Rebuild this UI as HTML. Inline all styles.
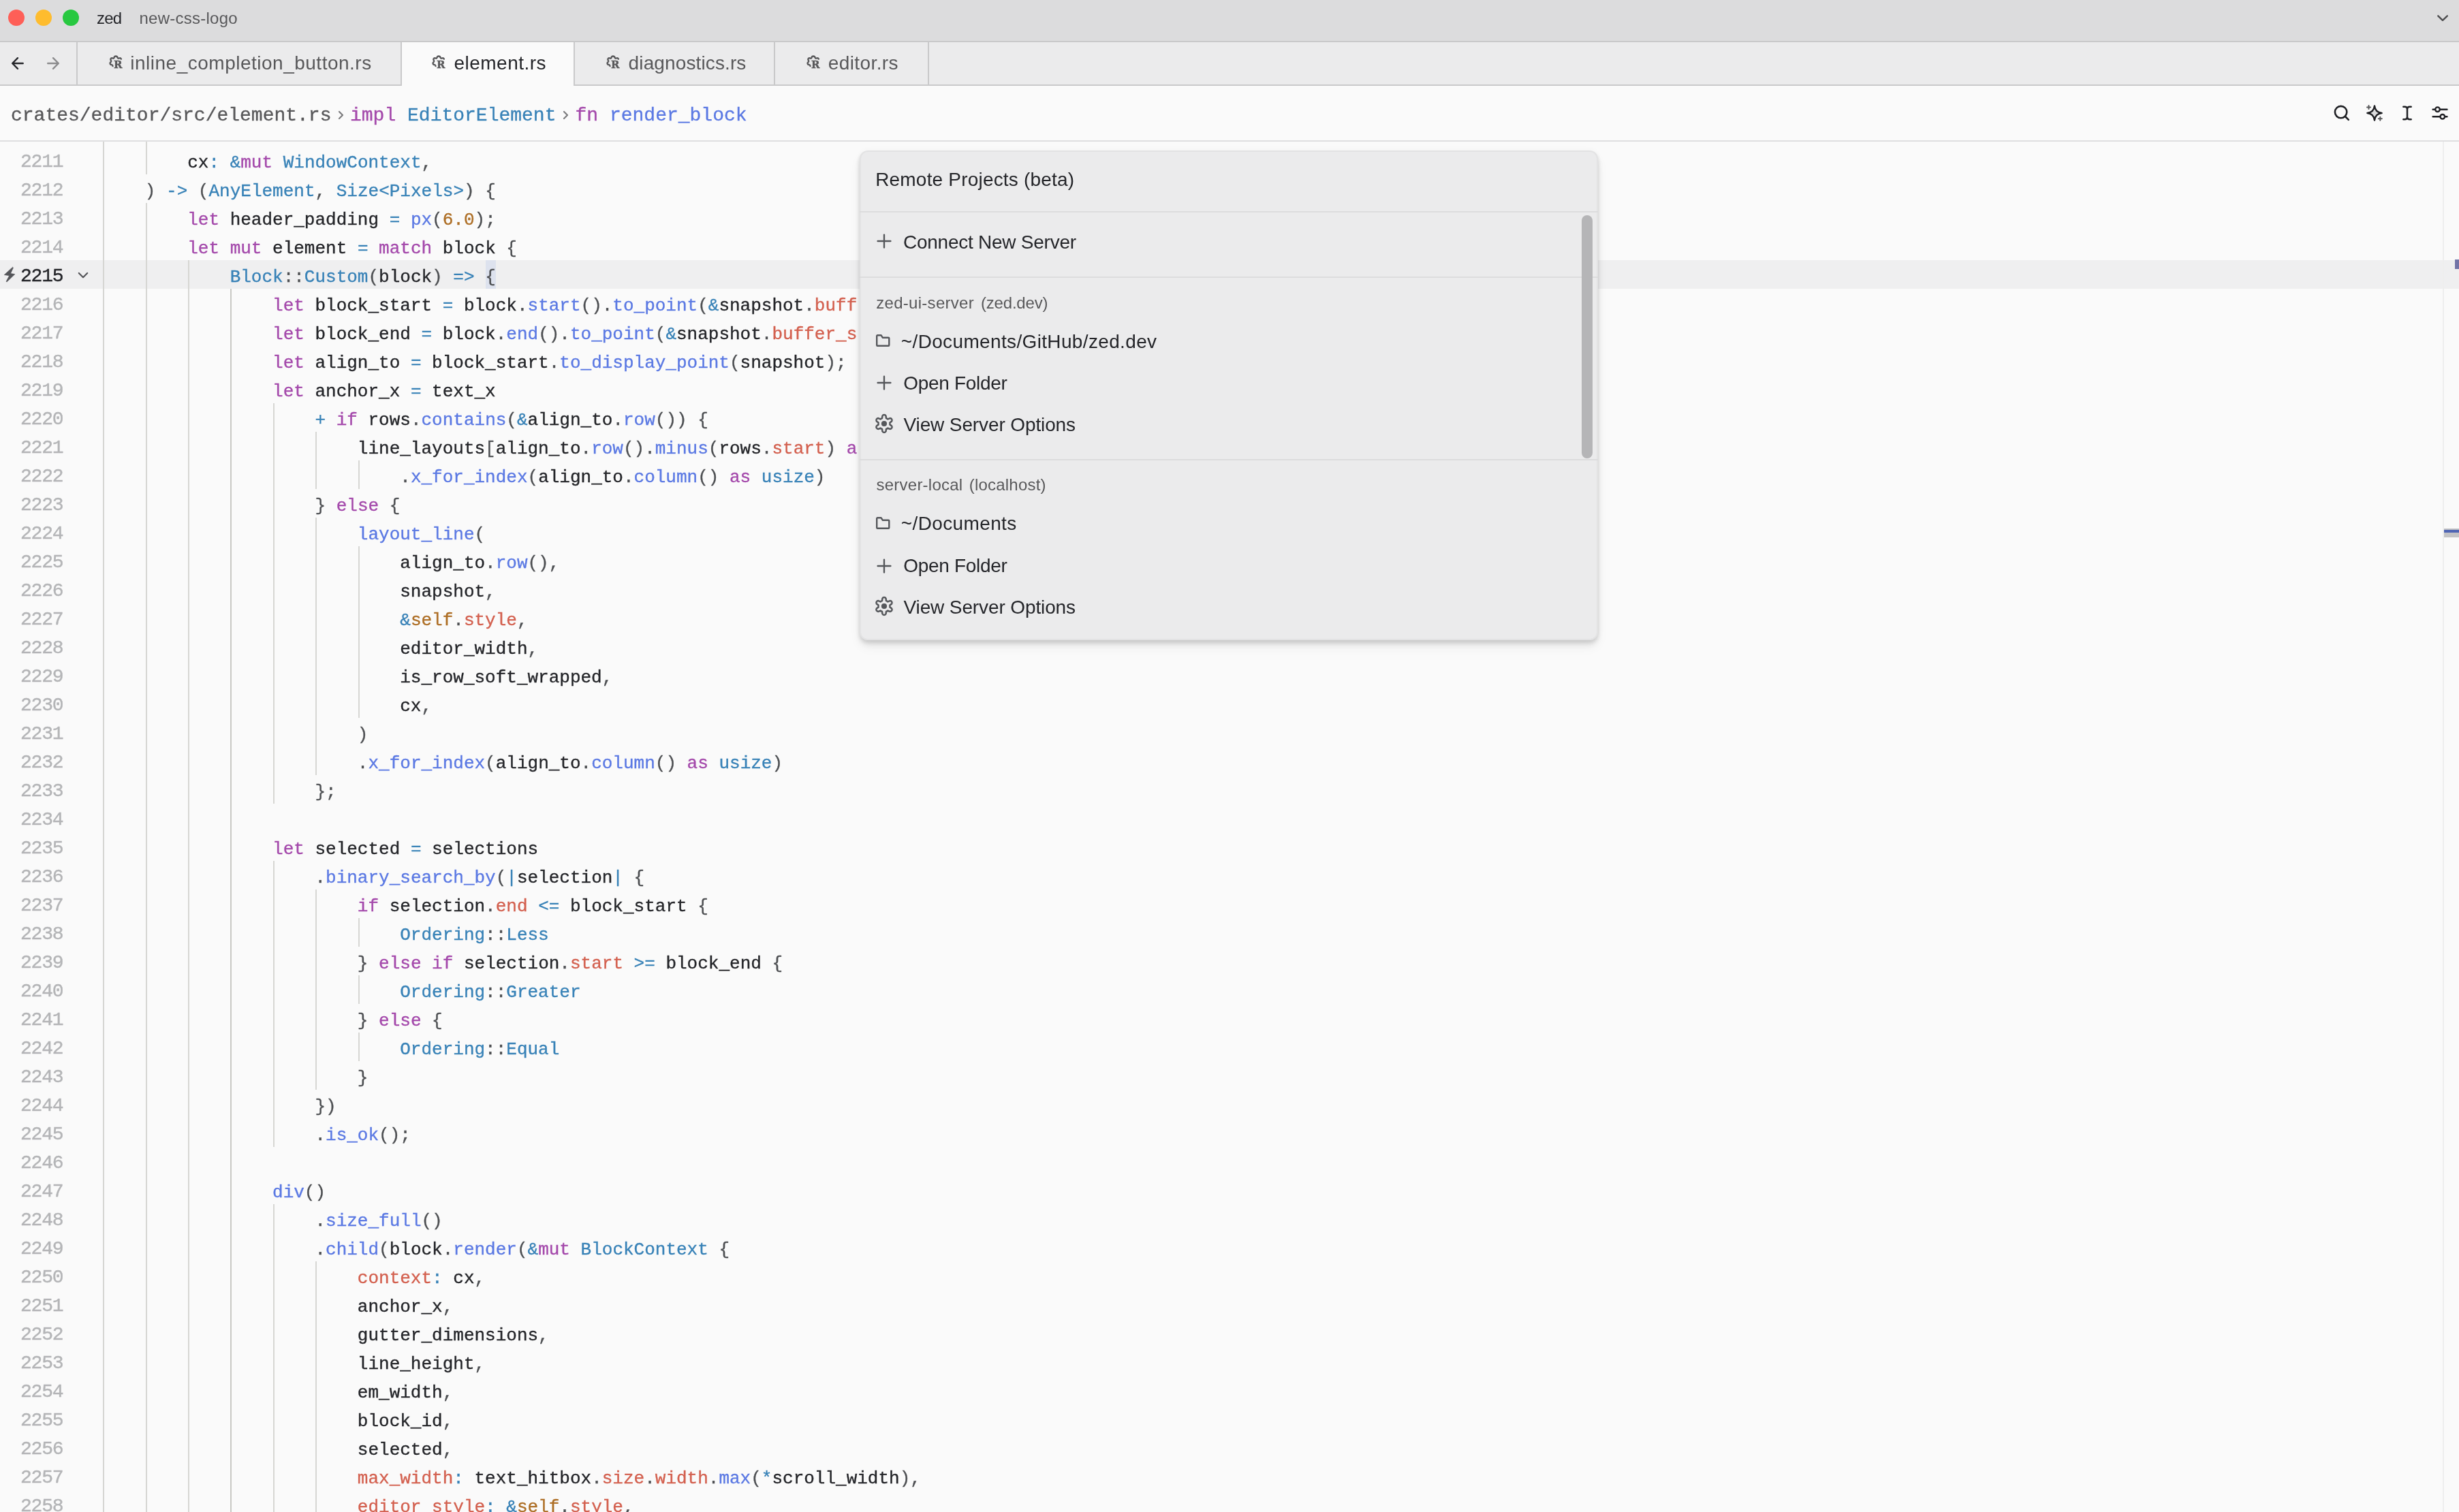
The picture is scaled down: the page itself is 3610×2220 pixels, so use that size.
<!DOCTYPE html><html><head><meta charset="utf-8"><title>zed</title><style>
*{margin:0;padding:0;box-sizing:border-box}
html,body{width:3610px;height:2220px;overflow:hidden;background:#fafafa}
body{position:relative;font-family:"Liberation Sans",sans-serif;color:#242529}
#root{position:absolute;left:0;top:0;width:3610px;height:2220px;will-change:transform}
i{display:block;position:absolute}
svg{position:absolute;overflow:visible}
.tx{position:absolute;white-space:pre}
.s28{font-size:28px;line-height:32px}
.s24{font-size:24px;line-height:28px}
.mu{color:#58585a}
#title{position:absolute;left:0;top:0;width:3610px;height:62px;background:#dcdcdd;border-bottom:2px solid #c9c9ca}
.tl{position:absolute;top:14px;width:24px;height:24px;border-radius:50%}
#tabs{position:absolute;left:0;top:62px;width:3610px;height:64px;background:#ebebec;border-bottom:2px solid #c9c9ca}
.vb{position:absolute;top:62px;width:2px;height:64px;background:#c9c9ca}
#act{position:absolute;left:590px;top:62px;width:252px;height:64px;background:#fafafa}
.ri{top:81px}
#crumb{position:absolute;left:0;top:126px;width:3610px;height:82px;background:#fafafa;border-bottom:2px solid #dfdfe0}
.bc{position:absolute;top:153.6px;font-family:"Liberation Mono",monospace;font-size:28px;line-height:32px;white-space:pre;color:#58585a;-webkit-text-stroke:.35px}
.g{width:2px;background:#d6d6d3}.ga{background:#c9c9c5}
#al{left:0;top:382px;width:3610px;height:42px;background:#efeff0}
.ln{position:absolute;left:0;width:92.400px;height:42px;text-align:right;font-family:"Liberation Mono",monospace;font-size:28px;letter-spacing:-1.2px;line-height:42px;padding-top:3.300px;color:#b4b5b7;white-space:pre;-webkit-text-stroke:.4px}
.ln.cur{color:#242529}
.cl{position:absolute;left:150.4px;height:42px;font-family:"Liberation Mono",monospace;font-size:26px;line-height:42px;padding-top:4.200px;white-space:pre;color:#242529;-webkit-text-stroke:.35px}
.cl.clip{width:1107.6px;overflow:hidden}
.k{color:#a449ab}.f{color:#5b79e3}.t{color:#3882b7}.p{color:#d3604f}.n{color:#ad6e25}.o{color:#3882b7}.b{color:#4d4f52}.v{color:#ad6e25}
#sbar{left:3586px;top:208px;width:2px;height:2012px;background:#eeeeee}
#modal{position:absolute;left:1262px;top:221px;width:1084px;height:719px;background:#ebebec;border:2px solid #e3e3e4;border-radius:12px;box-shadow:0 4px 6px rgba(0,0,0,.10),0 6px 12px rgba(0,0,0,.07),0 10px 16px rgba(0,0,0,.06),0 0 8px rgba(0,0,0,.04)}
.hr{left:1262px;width:1084px;height:2px;background:#dcdcdd}
.sb{left:2322px;top:316px;width:16px;height:357px;border-radius:8px;background:#b5b5b7}
.ic{}
</style></head><body><div id="root">
<div id="title"><i class="tl" style="left:12px;background:#fe5f57"></i><i class="tl" style="left:52px;background:#febc2e"></i><i class="tl" style="left:92px;background:#28c840"></i></div>
<span class="tx s24" style="left:142px;top:13.1px;color:#242529;letter-spacing:-.8px">zed</span>
<span class="tx s24" style="left:204.5px;top:13.1px;color:#58585a;letter-spacing:.25px">new-css-logo</span>
<svg style="left:3576px;top:18px" width="20" height="20" viewBox="0 0 20 20"><path d="M3.300 5.300L10 11.800L16.800 5.300" fill="none" stroke="#4c4c4e" stroke-width="2.400" stroke-linecap="round" stroke-linejoin="round"/></svg>
<div id="tabs"></div><div id="act"></div>
<i class="vb" style="left:112px"></i>
<i class="vb" style="left:588px"></i>
<i class="vb" style="left:842px"></i>
<i class="vb" style="left:1136px"></i>
<i class="vb" style="left:1362px"></i>
<svg style="left:0;top:62px" width="112" height="62" viewBox="0 62 112 62"><path d="M26 85.200L18.200 93L26 100.800M18.200 93H33.700" fill="none" stroke="#242529" stroke-width="2.400" stroke-linecap="round" stroke-linejoin="round"/></svg>
<svg style="left:0;top:62px" width="112" height="62" viewBox="0 62 112 62"><path d="M78 85.200L85.800 93L78 100.800M85.800 93H70.200" fill="none" stroke="#8b8b8d" stroke-width="2.400" stroke-linecap="round" stroke-linejoin="round"/></svg>
<svg class="ri" style="left:160px" width="20" height="20" viewBox="0 0 20 20"><path d="M17.9 5.6c-.7-1.4-2-1.7-3.2-1.1-.8.4-1.6.3-1.9-.6C12.3 2.500 11.300 1.500 10 1.500S7.800 2.400 7.400 3.800c-.3.900-1.100 1.100-1.900.7-1.300-.7-2.700-.100-3.100 1.300-.3 1 .3 1.700.7 2.300.5.800.100 1.500-.6 2.100-1.100.900-1.300 2.200-.400 3.200.6.700 1.400.700 2.100.800.900.200 1.200.800 1.300 1.800" fill="none" stroke="#58585a" stroke-width="2.400" stroke-linecap="round" stroke-linejoin="round"/><text x="7.100" y="19.300" font-family="'DejaVu Serif','Liberation Serif',serif" font-weight="bold" font-size="15" fill="#58585a" stroke="#58585a" stroke-width=".4">R</text></svg>
<span class="tx s28 mu" style="left:191.3px;top:76.9px;letter-spacing:.5px">inline_completion_button.rs</span>
<svg class="ri" style="left:634px" width="20" height="20" viewBox="0 0 20 20"><path d="M17.9 5.6c-.7-1.4-2-1.7-3.2-1.1-.8.4-1.6.3-1.9-.6C12.3 2.500 11.300 1.500 10 1.500S7.800 2.400 7.400 3.800c-.3.900-1.100 1.100-1.900.7-1.300-.7-2.700-.100-3.100 1.300-.3 1 .3 1.700.7 2.300.5.800.100 1.500-.6 2.100-1.100.900-1.300 2.200-.400 3.200.6.700 1.400.700 2.100.800.900.200 1.200.800 1.300 1.800" fill="none" stroke="#58585a" stroke-width="2.400" stroke-linecap="round" stroke-linejoin="round"/><text x="7.100" y="19.300" font-family="'DejaVu Serif','Liberation Serif',serif" font-weight="bold" font-size="15" fill="#58585a" stroke="#58585a" stroke-width=".4">R</text></svg>
<span class="tx s28" style="left:666.5px;top:76.9px;letter-spacing:.48px">element.rs</span>
<svg class="ri" style="left:889.5px" width="20" height="20" viewBox="0 0 20 20"><path d="M17.9 5.6c-.7-1.4-2-1.7-3.2-1.1-.8.4-1.6.3-1.9-.6C12.3 2.500 11.300 1.500 10 1.500S7.800 2.400 7.400 3.800c-.3.900-1.100 1.100-1.900.7-1.300-.7-2.700-.100-3.100 1.300-.3 1 .3 1.700.7 2.300.5.800.100 1.500-.6 2.100-1.100.900-1.300 2.200-.400 3.200.6.700 1.400.700 2.100.800.900.200 1.200.800 1.300 1.800" fill="none" stroke="#58585a" stroke-width="2.400" stroke-linecap="round" stroke-linejoin="round"/><text x="7.100" y="19.300" font-family="'DejaVu Serif','Liberation Serif',serif" font-weight="bold" font-size="15" fill="#58585a" stroke="#58585a" stroke-width=".4">R</text></svg>
<span class="tx s28 mu" style="left:922.6px;top:76.9px;letter-spacing:.12px">diagnostics.rs</span>
<svg class="ri" style="left:1184px" width="20" height="20" viewBox="0 0 20 20"><path d="M17.9 5.6c-.7-1.4-2-1.7-3.2-1.1-.8.4-1.6.3-1.9-.6C12.3 2.500 11.300 1.500 10 1.500S7.800 2.400 7.400 3.800c-.3.900-1.100 1.100-1.900.7-1.300-.7-2.700-.100-3.100 1.300-.3 1 .3 1.700.7 2.300.5.800.100 1.500-.6 2.100-1.100.900-1.300 2.200-.400 3.200.6.700 1.400.700 2.100.800.900.200 1.200.800 1.300 1.800" fill="none" stroke="#58585a" stroke-width="2.400" stroke-linecap="round" stroke-linejoin="round"/><text x="7.100" y="19.300" font-family="'DejaVu Serif','Liberation Serif',serif" font-weight="bold" font-size="15" fill="#58585a" stroke="#58585a" stroke-width=".4">R</text></svg>
<span class="tx s28 mu" style="left:1215.8px;top:76.9px;letter-spacing:.4px">editor.rs</span>
<div id="crumb"></div>
<span class="bc" style="left:16px">crates/editor/src/element.rs</span>
<svg style="left:495px;top:162px" width="12" height="14" viewBox="0 0 12 14"><path d="M3 2L8 7L3 12" fill="none" stroke="#7b7b7d" stroke-width="2.200" stroke-linecap="round" stroke-linejoin="round"/></svg>
<span class="bc" style="left:514px"><span class="k">impl</span> <span class="t">EditorElement</span></span>
<svg style="left:825px;top:162px" width="12" height="14" viewBox="0 0 12 14"><path d="M3 2L8 7L3 12" fill="none" stroke="#7b7b7d" stroke-width="2.200" stroke-linecap="round" stroke-linejoin="round"/></svg>
<span class="bc" style="left:844.5px"><span class="k">fn</span> <span class="f">render_block</span></span>
<svg style="left:3424px;top:152px" width="28" height="28" viewBox="0 0 28 28"><circle cx="12.600" cy="12.600" r="8.700" fill="none" stroke="#1f2024" stroke-width="2.600"/><path d="M19 19L23.800 23.800" stroke="#1f2024" stroke-width="2.600" stroke-linecap="round"/></svg>
<svg style="left:3472px;top:152px" width="28" height="28" viewBox="0 0 28 28"><path d="M14 3.400C14.700 9.800 18.200 13.300 24.600 14C18.200 14.700 14.700 18.200 14 24.600C13.300 18.200 9.800 14.700 3.400 14C9.800 13.300 13.300 9.800 14 3.400Z" fill="#dcdcdd" stroke="#1f2024" stroke-width="2.400" stroke-linejoin="round"/><path d="M5.500 3v5M3 5.500h5M22.300 19.700v5M19.800 22.200h5" stroke="#58585a" stroke-width="2" stroke-linecap="round"/></svg>
<svg style="left:3520px;top:152px" width="28" height="28" viewBox="0 0 28 28"><path d="M8.300 4.700h2.200c2 0 3.500 1.200 3.500 3.500c0-2.300 1.500-3.500 3.500-3.500h2.200M8.300 23.200h2.200c2 0 3.500-1.200 3.500-3.500c0 2.300 1.500 3.500 3.500 3.500h2.200M14 8v12" fill="none" stroke="#1f2024" stroke-width="2.500" stroke-linecap="round" stroke-linejoin="round"/></svg>
<svg style="left:3568px;top:152px" width="28" height="28" viewBox="0 0 28 28"><path d="M3.600 8.700h3M14.500 8.700h10M3.600 19.300h10.500M21.800 19.300h2.700" stroke="#1f2024" stroke-width="2.400" stroke-linecap="round"/><circle cx="10.500" cy="8.700" r="3.300" fill="none" stroke="#1f2024" stroke-width="2.400"/><circle cx="17.800" cy="19.300" r="3.300" fill="none" stroke="#1f2024" stroke-width="2.400"/></svg>
<i id="al"></i>
<i style="left:712.5px;top:382px;width:15.600px;height:42px;background:#dde2ee"></i>
<i class="g" style="left:151px;top:208px;height:2022px"></i><i class="g" style="left:214px;top:208px;height:48px"></i><i class="g" style="left:214px;top:298px;height:1932px"></i><i class="g" style="left:276px;top:382px;height:1848px"></i><i class="g" style="left:338px;top:424px;height:0px"></i><i class="g ga" style="left:338px;top:424px;height:1806px"></i><i class="g" style="left:401px;top:592px;height:588px"></i><i class="g" style="left:401px;top:1264px;height:420px"></i><i class="g" style="left:401px;top:1768px;height:462px"></i><i class="g" style="left:463px;top:634px;height:84px"></i><i class="g" style="left:463px;top:760px;height:378px"></i><i class="g" style="left:463px;top:1306px;height:294px"></i><i class="g" style="left:463px;top:1852px;height:378px"></i><i class="g" style="left:526px;top:676px;height:42px"></i><i class="g" style="left:526px;top:802px;height:252px"></i><i class="g" style="left:526px;top:1348px;height:42px"></i><i class="g" style="left:526px;top:1432px;height:42px"></i><i class="g" style="left:526px;top:1516px;height:42px"></i>
<div class="ln" style="top:214px">2211</div><div class="ln" style="top:256px">2212</div><div class="ln" style="top:298px">2213</div><div class="ln" style="top:340px">2214</div><div class="ln cur" style="top:382px">2215</div><div class="ln" style="top:424px">2216</div><div class="ln" style="top:466px">2217</div><div class="ln" style="top:508px">2218</div><div class="ln" style="top:550px">2219</div><div class="ln" style="top:592px">2220</div><div class="ln" style="top:634px">2221</div><div class="ln" style="top:676px">2222</div><div class="ln" style="top:718px">2223</div><div class="ln" style="top:760px">2224</div><div class="ln" style="top:802px">2225</div><div class="ln" style="top:844px">2226</div><div class="ln" style="top:886px">2227</div><div class="ln" style="top:928px">2228</div><div class="ln" style="top:970px">2229</div><div class="ln" style="top:1012px">2230</div><div class="ln" style="top:1054px">2231</div><div class="ln" style="top:1096px">2232</div><div class="ln" style="top:1138px">2233</div><div class="ln" style="top:1180px">2234</div><div class="ln" style="top:1222px">2235</div><div class="ln" style="top:1264px">2236</div><div class="ln" style="top:1306px">2237</div><div class="ln" style="top:1348px">2238</div><div class="ln" style="top:1390px">2239</div><div class="ln" style="top:1432px">2240</div><div class="ln" style="top:1474px">2241</div><div class="ln" style="top:1516px">2242</div><div class="ln" style="top:1558px">2243</div><div class="ln" style="top:1600px">2244</div><div class="ln" style="top:1642px">2245</div><div class="ln" style="top:1684px">2246</div><div class="ln" style="top:1726px">2247</div><div class="ln" style="top:1768px">2248</div><div class="ln" style="top:1810px">2249</div><div class="ln" style="top:1852px">2250</div><div class="ln" style="top:1894px">2251</div><div class="ln" style="top:1936px">2252</div><div class="ln" style="top:1978px">2253</div><div class="ln" style="top:2020px">2254</div><div class="ln" style="top:2062px">2255</div><div class="ln" style="top:2104px">2256</div><div class="ln" style="top:2146px">2257</div><div class="ln" style="top:2188px">2258</div>
<svg style="left:4px;top:390px" width="20" height="26" viewBox="0 0 20 26"><path d="M14.600 2.200L2.200 13.600L9.600 14.700L5 23.400L6.200 23.800L17.900 12.600L11.600 11.500L15.500 3Z" fill="#55565a" stroke="#55565a" stroke-width=".6" stroke-linejoin="round"/></svg>
<svg style="left:112px;top:394.7px" width="20" height="20" viewBox="0 0 20 20"><path d="M3.800 6L10 12.200L16.200 6" fill="none" stroke="#55565a" stroke-width="2.200" stroke-linecap="round" stroke-linejoin="round"/></svg>
<div class="cl" style="top:214px">        cx<span class="o">:</span> <span class="o">&amp;</span><span class="k">mut</span> <span class="t">WindowContext</span><span class="b">,</span></div><div class="cl" style="top:256px">    <span class="b">)</span> <span class="o">-&gt;</span> <span class="b">(</span><span class="t">AnyElement</span><span class="b">,</span> <span class="t">Size</span><span class="o">&lt;</span><span class="t">Pixels</span><span class="o">&gt;</span><span class="b">)</span> <span class="b">{</span></div><div class="cl" style="top:298px">        <span class="k">let</span> header_padding <span class="o">=</span> <span class="f">px</span><span class="b">(</span><span class="n">6.0</span><span class="b">);</span></div><div class="cl" style="top:340px">        <span class="k">let</span> <span class="k">mut</span> element <span class="o">=</span> <span class="k">match</span> block <span class="b">{</span></div><div class="cl" style="top:382px">            <span class="t">Block</span><span class="b">::</span><span class="t">Custom</span><span class="b">(</span>block<span class="b">)</span> <span class="o">=&gt;</span> <span class="b">{</span></div><div class="cl clip" style="top:424px">                <span class="k">let</span> block_start <span class="o">=</span> block<span class="b">.</span><span class="f">start</span><span class="b">().</span><span class="f">to_point</span><span class="b">(</span><span class="o">&amp;</span>snapshot<span class="b">.</span><span class="p">buffer_snapshot</span><span class="b">);</span></div><div class="cl clip" style="top:466px">                <span class="k">let</span> block_end <span class="o">=</span> block<span class="b">.</span><span class="f">end</span><span class="b">().</span><span class="f">to_point</span><span class="b">(</span><span class="o">&amp;</span>snapshot<span class="b">.</span><span class="p">buffer_snapshot</span><span class="b">);</span></div><div class="cl" style="top:508px">                <span class="k">let</span> align_to <span class="o">=</span> block_start<span class="b">.</span><span class="f">to_display_point</span><span class="b">(</span>snapshot<span class="b">);</span></div><div class="cl" style="top:550px">                <span class="k">let</span> anchor_x <span class="o">=</span> text_x</div><div class="cl" style="top:592px">                    <span class="o">+</span> <span class="k">if</span> rows<span class="b">.</span><span class="f">contains</span><span class="b">(</span><span class="o">&amp;</span>align_to<span class="b">.</span><span class="f">row</span><span class="b">())</span> <span class="b">{</span></div><div class="cl clip" style="top:634px">                        line_layouts<span class="b">[</span>align_to<span class="b">.</span><span class="f">row</span><span class="b">().</span><span class="f">minus</span><span class="b">(</span>rows<span class="b">.</span><span class="p">start</span><span class="b">)</span> <span class="k">as</span> <span class="t">usize</span><span class="b">]</span></div><div class="cl" style="top:676px">                            <span class="b">.</span><span class="f">x_for_index</span><span class="b">(</span>align_to<span class="b">.</span><span class="f">column</span><span class="b">()</span> <span class="k">as</span> <span class="t">usize</span><span class="b">)</span></div><div class="cl" style="top:718px">                    <span class="b">}</span> <span class="k">else</span> <span class="b">{</span></div><div class="cl" style="top:760px">                        <span class="f">layout_line</span><span class="b">(</span></div><div class="cl" style="top:802px">                            align_to<span class="b">.</span><span class="f">row</span><span class="b">(),</span></div><div class="cl" style="top:844px">                            snapshot<span class="b">,</span></div><div class="cl" style="top:886px">                            <span class="o">&amp;</span><span class="v">self</span><span class="b">.</span><span class="p">style</span><span class="b">,</span></div><div class="cl" style="top:928px">                            editor_width<span class="b">,</span></div><div class="cl" style="top:970px">                            is_row_soft_wrapped<span class="b">,</span></div><div class="cl" style="top:1012px">                            cx<span class="b">,</span></div><div class="cl" style="top:1054px">                        <span class="b">)</span></div><div class="cl" style="top:1096px">                        <span class="b">.</span><span class="f">x_for_index</span><span class="b">(</span>align_to<span class="b">.</span><span class="f">column</span><span class="b">()</span> <span class="k">as</span> <span class="t">usize</span><span class="b">)</span></div><div class="cl" style="top:1138px">                    <span class="b">};</span></div><div class="cl" style="top:1222px">                <span class="k">let</span> selected <span class="o">=</span> selections</div><div class="cl" style="top:1264px">                    <span class="b">.</span><span class="f">binary_search_by</span><span class="b">(</span><span class="o">|</span>selection<span class="o">|</span> <span class="b">{</span></div><div class="cl" style="top:1306px">                        <span class="k">if</span> selection<span class="b">.</span><span class="p">end</span> <span class="o">&lt;=</span> block_start <span class="b">{</span></div><div class="cl" style="top:1348px">                            <span class="t">Ordering</span><span class="b">::</span><span class="t">Less</span></div><div class="cl" style="top:1390px">                        <span class="b">}</span> <span class="k">else</span> <span class="k">if</span> selection<span class="b">.</span><span class="p">start</span> <span class="o">&gt;=</span> block_end <span class="b">{</span></div><div class="cl" style="top:1432px">                            <span class="t">Ordering</span><span class="b">::</span><span class="t">Greater</span></div><div class="cl" style="top:1474px">                        <span class="b">}</span> <span class="k">else</span> <span class="b">{</span></div><div class="cl" style="top:1516px">                            <span class="t">Ordering</span><span class="b">::</span><span class="t">Equal</span></div><div class="cl" style="top:1558px">                        <span class="b">}</span></div><div class="cl" style="top:1600px">                    <span class="b">})</span></div><div class="cl" style="top:1642px">                    <span class="b">.</span><span class="f">is_ok</span><span class="b">();</span></div><div class="cl" style="top:1726px">                <span class="f">div</span><span class="b">()</span></div><div class="cl" style="top:1768px">                    <span class="b">.</span><span class="f">size_full</span><span class="b">()</span></div><div class="cl" style="top:1810px">                    <span class="b">.</span><span class="f">child</span><span class="b">(</span>block<span class="b">.</span><span class="f">render</span><span class="b">(</span><span class="o">&amp;</span><span class="k">mut</span> <span class="t">BlockContext</span> <span class="b">{</span></div><div class="cl" style="top:1852px">                        <span class="p">context</span><span class="o">:</span> cx<span class="b">,</span></div><div class="cl" style="top:1894px">                        anchor_x<span class="b">,</span></div><div class="cl" style="top:1936px">                        gutter_dimensions<span class="b">,</span></div><div class="cl" style="top:1978px">                        line_height<span class="b">,</span></div><div class="cl" style="top:2020px">                        em_width<span class="b">,</span></div><div class="cl" style="top:2062px">                        block_id<span class="b">,</span></div><div class="cl" style="top:2104px">                        selected<span class="b">,</span></div><div class="cl" style="top:2146px">                        <span class="p">max_width</span><span class="o">:</span> text_hitbox<span class="b">.</span><span class="p">size</span><span class="b">.</span><span class="p">width</span><span class="b">.</span><span class="f">max</span><span class="b">(</span><span class="o">*</span>scroll_width<span class="b">),</span></div><div class="cl" style="top:2188px">                        <span class="p">editor_style</span><span class="o">:</span> <span class="o">&amp;</span><span class="v">self</span><span class="b">.</span><span class="p">style</span><span class="b">,</span></div>
<i id="sbar"></i>
<i style="left:3604px;top:381px;width:6px;height:14px;background:#7274a7"></i>
<i style="left:3588px;top:776px;width:22px;height:13px;background:#c3c3c5"></i>
<i style="left:3588px;top:778px;width:22px;height:4px;background:#4f65b4"></i>
<div id="modal"></div>
<span class="tx s28" style="left:1285.2px;top:248.1px;color:#242529;letter-spacing:.19px">Remote Projects (beta)</span><i class="hr" style="top:310px"></i><svg class="ic" style="left:1287px;top:343.1px" width="22" height="22" viewBox="0 0 22 22"><path d="M11 1.600v18.800M1.600 11h18.800" stroke="#55575b" stroke-width="2.400" stroke-linecap="round" fill="none"/></svg><span class="tx s28" style="left:1326px;top:339.7px;letter-spacing:-.25px">Connect New Server</span><i class="hr" style="top:406px"></i><span class="tx s24 mu" style="left:1286.3px;top:430.5px;letter-spacing:.28px">zed-ui-server</span><span class="tx s24 mu" style="left:1440px;top:430.5px;letter-spacing:-.2px">(zed.dev)</span><svg class="ic" style="left:1285px;top:489.7px" width="22" height="20" viewBox="0 0 22 20"><path d="M2.200 3.200a1 1 0 0 1 1-1h5.300l2.400 3.600h8.400a1 1 0 0 1 1 1v10a1 1 0 0 1-1 1h-16.100a1 1 0 0 1-1-1z" stroke="#55575b" stroke-width="2.400" stroke-linejoin="round" fill="none"/></svg><span class="tx s28" style="left:1322.8px;top:486.1px;letter-spacing:.35px">~/Documents/GitHub/zed.dev</span><svg class="ic" style="left:1287px;top:550.8px" width="22" height="22" viewBox="0 0 22 22"><path d="M11 1.600v18.800M1.600 11h18.800" stroke="#55575b" stroke-width="2.400" stroke-linecap="round" fill="none"/></svg><span class="tx s28" style="left:1326.2px;top:547.1px;letter-spacing:-.3px">Open Folder</span><svg class="ic" style="left:1283px;top:606px" width="30" height="32" viewBox="-15 -16 30 32"><path d="M-2.91 -7.99L-2.61 -11.30A2.90 2.90 0 0 1 2.61 -11.30L2.91 -7.99A8.50 8.50 0 0 1 5.46 -6.51L8.48 -7.91A2.90 2.90 0 0 1 11.09 -3.39L8.37 -1.48A8.50 8.50 0 0 1 8.37 1.48L11.09 3.39A2.90 2.90 0 0 1 8.48 7.91L5.46 6.51A8.50 8.50 0 0 1 2.91 7.99L2.61 11.30A2.90 2.90 0 0 1 -2.61 11.30L-2.91 7.99A8.50 8.50 0 0 1 -5.46 6.51L-8.48 7.91A2.90 2.90 0 0 1 -11.09 3.39L-8.37 1.48A8.50 8.50 0 0 1 -8.37 -1.48L-11.09 -3.39A2.90 2.90 0 0 1 -8.48 -7.91L-5.46 -6.51A8.50 8.50 0 0 1 -2.91 -7.99Z" stroke="#55575b" stroke-width="2.500" stroke-linejoin="round" fill="none"/><circle r="4.100" fill="#55575b"/></svg><span class="tx s28" style="left:1326.5px;top:607.5px;letter-spacing:-.12px">View Server Options</span><i class="hr" style="top:674px"></i><span class="tx s24 mu" style="left:1286.5px;top:698.3px;letter-spacing:.24px">server-local</span><span class="tx s24 mu" style="left:1422.8px;top:698.3px;letter-spacing:.2px">(localhost)</span><svg class="ic" style="left:1285px;top:757.7px" width="22" height="20" viewBox="0 0 22 20"><path d="M2.200 3.200a1 1 0 0 1 1-1h5.300l2.400 3.600h8.400a1 1 0 0 1 1 1v10a1 1 0 0 1-1 1h-16.100a1 1 0 0 1-1-1z" stroke="#55575b" stroke-width="2.400" stroke-linejoin="round" fill="none"/></svg><span class="tx s28" style="left:1322.8px;top:753.3px;letter-spacing:.37px">~/Documents</span><svg class="ic" style="left:1287px;top:819.5px" width="22" height="22" viewBox="0 0 22 22"><path d="M11 1.600v18.800M1.600 11h18.800" stroke="#55575b" stroke-width="2.400" stroke-linecap="round" fill="none"/></svg><span class="tx s28" style="left:1326.2px;top:815.3px;letter-spacing:-.3px">Open Folder</span><svg class="ic" style="left:1283px;top:874px" width="30" height="32" viewBox="-15 -16 30 32"><path d="M-2.91 -7.99L-2.61 -11.30A2.90 2.90 0 0 1 2.61 -11.30L2.91 -7.99A8.50 8.50 0 0 1 5.46 -6.51L8.48 -7.91A2.90 2.90 0 0 1 11.09 -3.39L8.37 -1.48A8.50 8.50 0 0 1 8.37 1.48L11.09 3.39A2.90 2.90 0 0 1 8.48 7.91L5.46 6.51A8.50 8.50 0 0 1 2.91 7.99L2.61 11.30A2.90 2.90 0 0 1 -2.61 11.30L-2.91 7.99A8.50 8.50 0 0 1 -5.46 6.51L-8.48 7.91A2.90 2.90 0 0 1 -11.09 3.39L-8.37 1.48A8.50 8.50 0 0 1 -8.37 -1.48L-11.09 -3.39A2.90 2.90 0 0 1 -8.48 -7.91L-5.46 -6.51A8.50 8.50 0 0 1 -2.91 -7.99Z" stroke="#55575b" stroke-width="2.500" stroke-linejoin="round" fill="none"/><circle r="4.100" fill="#55575b"/></svg><span class="tx s28" style="left:1326.5px;top:875.5px;letter-spacing:-.12px">View Server Options</span><i class="sb"></i>
</div></body></html>
